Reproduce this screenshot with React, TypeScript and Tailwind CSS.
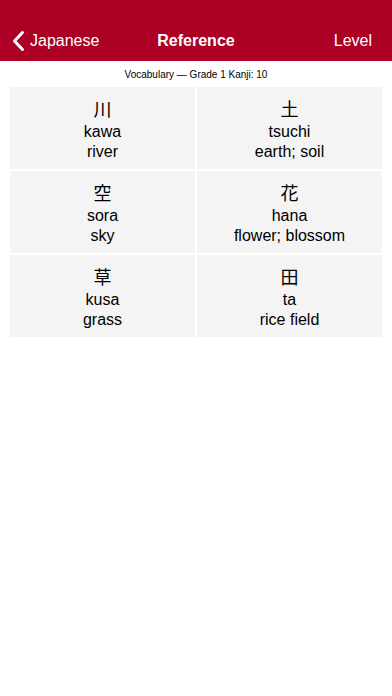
const items = [
  { kanji: '川', reading: 'kawa', meaning: 'river' },
  { kanji: '土', reading: 'tsuchi', meaning: 'earth; soil' },
  { kanji: '空', reading: 'sora', meaning: 'sky' },
  { kanji: '花', reading: 'hana', meaning: 'flower; blossom' },
  { kanji: '草', reading: 'kusa', meaning: 'grass' },
  { kanji: '田', reading: 'ta', meaning: 'rice field' },
];

export default function App() {
  return (
    <div
      className="min-h-[696px] w-[392px] bg-white"
      style={{ fontFamily: '"Liberation Sans", "Noto Sans CJK JP", sans-serif' }}
    >
      <header className="h-[61px] bg-[#ac0024] pt-[20px]">
        <div className="relative flex h-[41px] items-center justify-between pl-[12px] pr-[20px] text-white">
          <button className="flex items-center gap-[5px] text-[16px]">
            <svg width="13" height="22" viewBox="0 0 13 22" fill="none">
              <path d="M10.5 2.5 L2.5 11 L10.5 19.5" stroke="white" strokeWidth="3" strokeLinecap="round" strokeLinejoin="round" />
            </svg>
            Japanese
          </button>
          <h1 className="absolute left-1/2 -translate-x-1/2 text-[16px] font-bold">Reference</h1>
          <button className="text-[16px]">Level</button>
        </div>
      </header>

      <p className="pt-[6px] pb-[5px] text-center text-[10px] text-black">
        Vocabulary — Grade 1 Kanji: 10
      </p>

      <div className="mx-[10px] grid grid-cols-2 gap-[2px]">
        {items.map((item) => (
          <div
            key={item.kanji}
            className="flex h-[82px] flex-col items-center justify-center bg-[#f4f4f4] pt-[5px] text-[16px] leading-[20px] text-black"
          >
            <span className="text-[18px] leading-[23px]">{item.kanji}</span>
            <span>{item.reading}</span>
            <span>{item.meaning}</span>
          </div>
        ))}
      </div>
    </div>
  );
}
